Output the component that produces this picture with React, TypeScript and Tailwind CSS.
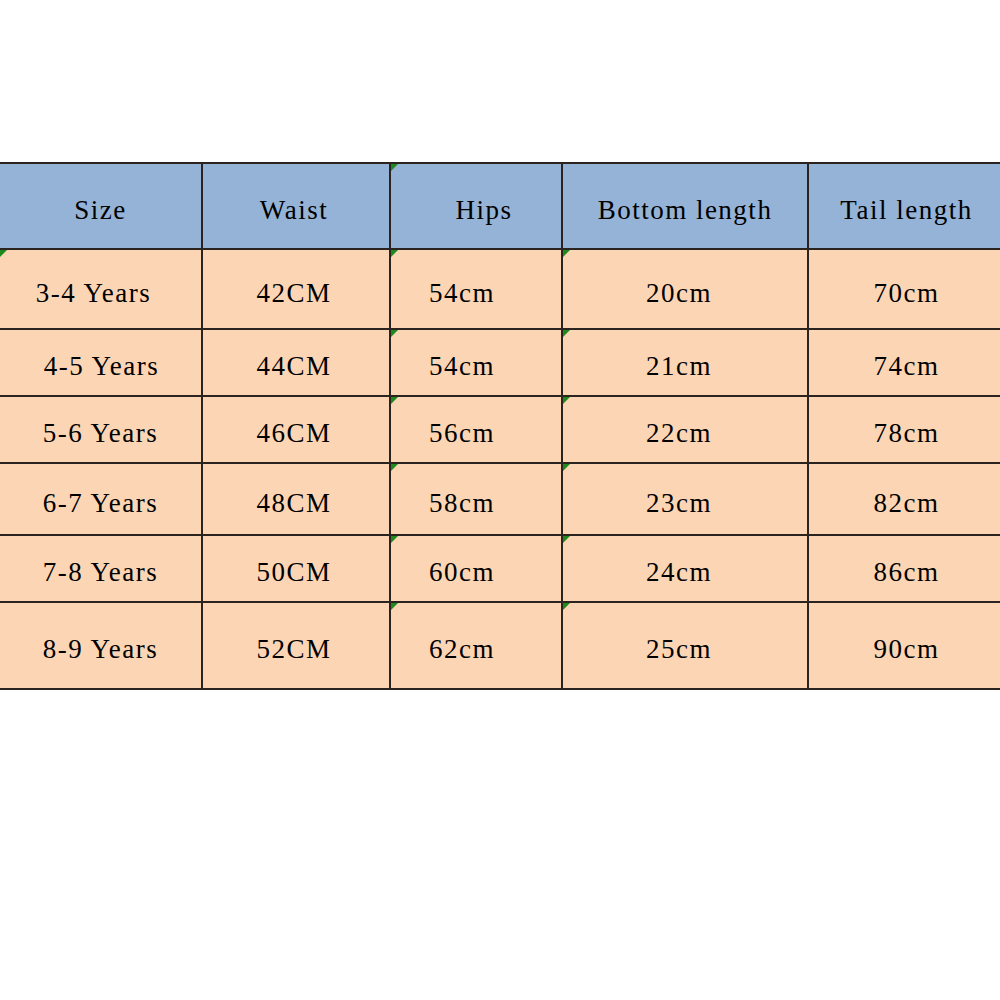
const cols = ['w-[203px]', 'w-[188px]', 'w-[172px]', 'w-[246px]', 'flex-1'];

const header = ['Size', 'Waist', 'Hips', 'Bottom length', 'Tail length'];
const headerPad = ['', 'pr-1', 'pl-4', '', 'pl-1'];

const rows = [
  { h: 'h-[80px]', size: '3-4 Years', sizePad: 'pr-[14px]', cells: ['42CM', '54cm', '20cm', '70cm'] },
  { h: 'h-[67px]', size: '4-5 Years', sizePad: 'pl-[2px]', cells: ['44CM', '54cm', '21cm', '74cm'] },
  { h: 'h-[67px]', size: '5-6 Years', sizePad: '', cells: ['46CM', '56cm', '22cm', '78cm'] },
  { h: 'h-[72px]', size: '6-7 Years', sizePad: '', cells: ['48CM', '58cm', '23cm', '82cm'] },
  { h: 'h-[67px]', size: '7-8 Years', sizePad: '', cells: ['50CM', '60cm', '24cm', '86cm'] },
  { h: 'h-[87px]', size: '8-9 Years', sizePad: '', cells: ['52CM', '62cm', '25cm', '90cm'] },
];

const dataPad = ['pr-1', 'pr-7', 'pr-3', 'pl-1'];

function Mark() {
  return (
    <svg className="absolute left-0 top-0" width="7" height="7" viewBox="0 0 7 7">
      <polygon points="0,0 7,0 0,7" fill="#1e8a1e" />
    </svg>
  );
}

export default function App() {
  return (
    <div
      className="w-[1000px] h-[1000px] bg-white overflow-hidden text-[27px] tracking-[1.5px] text-black"
      style={{ fontFamily: '"Liberation Serif", "DejaVu Serif", serif' }}
    >
      <div className="mt-[162px] border-t-2 border-[#2a2320]">
        {/* header */}
        <div className="flex h-[86px] bg-[#95b3d7]">
          {header.map((t, i) => (
            <div
              key={t}
              className={`${cols[i]} relative flex items-center justify-center pt-2 border-b-2 border-[#2a2320] ${i < 4 ? 'border-r-2' : ''} ${headerPad[i]}`}
            >
              {i === 2 && <Mark />}
              {t}
            </div>
          ))}
        </div>
        {/* body */}
        {rows.map((r, ri) => (
          <div key={r.size} className={`flex ${r.h} bg-[#fcd5b4]`}>
            <div className={`${cols[0]} relative flex items-center justify-center pt-2 border-b-2 border-r-2 border-[#2a2320] ${r.sizePad}`}>
              {ri === 0 && <Mark />}
              {r.size}
            </div>
            {r.cells.map((c, ci) => (
              <div
                key={ci}
                className={`${cols[ci + 1]} relative flex items-center justify-center pt-2 border-b-2 border-[#2a2320] ${ci < 3 ? 'border-r-2' : ''} ${dataPad[ci]}`}
              >
                {(ci === 1 || ci === 2) && <Mark />}
                {c}
              </div>
            ))}
          </div>
        ))}
      </div>
    </div>
  );
}
